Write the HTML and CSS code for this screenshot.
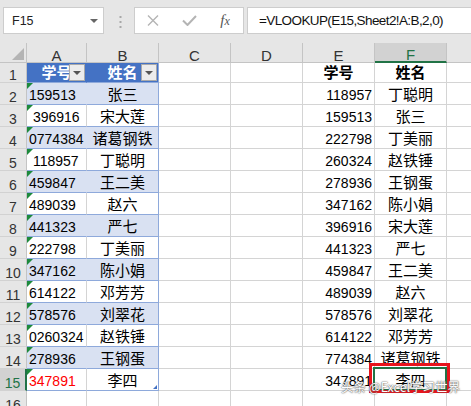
FILE: index.html
```html
<!DOCTYPE html>
<html lang="zh-CN">
<head>
<meta charset="utf-8">
<title>VLOOKUP</title>
<link rel="stylesheet" href="styles.css">
</head>
<body>
<div class="app">
  <div class="topbar">
    <div class="namebox"><span class="nbtext">F15</span><span class="nbarrow"></span></div>
    <svg class="dots" width="3" height="12" viewBox="0 0 3 12"><rect x="0.5" y="0" width="2" height="2" fill="#a8a8a8"/><rect x="0.5" y="5" width="2" height="2" fill="#a8a8a8"/><rect x="0.5" y="10" width="2" height="2" fill="#a8a8a8"/></svg>
    <div class="fxbox">
      <span class="slot"><svg width="12" height="11" viewBox="0 0 12 11"><path d="M1 0.5 L11 10.5 M11 0.5 L1 10.5" stroke="#b4b4b4" stroke-width="1.4" fill="none"/></svg></span>
      <span class="slot"><svg width="15" height="11" viewBox="0 0 15 11"><path d="M1 5.5 L5.5 10 L14 1" stroke="#b4b4b4" stroke-width="2" fill="none"/></svg></span>
      <span class="slot fx">f<span class="fxx">x</span></span>
    </div>
    <div class="formula">=VLOOKUP(E15,Sheet2!A:B,2,0)</div>
  </div>

  <div class="sheet">
    <div class="ch corner"><svg width="27" height="20" viewBox="0 0 27 20"><polygon points="12,17 24,17 24,5" fill="#b4b4b4"/></svg></div>
    <div class="ch">A</div><div class="ch">B</div><div class="ch">C</div><div class="ch">D</div><div class="ch">E</div><div class="ch sel">F</div><div class="ch">G</div>

    <div class="rh">1</div><div class="cell th ta ctr zh">学号<span class="fbtn"></span></div><div class="cell th tb ctr zh">姓名<span class="fbtn"></span></div><div class="cell"></div><div class="cell"></div><div class="cell ctr zh b">学号</div><div class="cell ctr zh b">姓名</div><div class="cell"></div>

    <div class="rh">2</div><div class="cell ta bd tri">159513</div><div class="cell tb bd ctr zh">张三</div><div class="cell"></div><div class="cell"></div><div class="cell rt">118957</div><div class="cell ctr zh">丁聪明</div><div class="cell"></div>

    <div class="rh">3</div><div class="cell ta tri"> 396916</div><div class="cell tb ctr zh">宋大莲</div><div class="cell"></div><div class="cell"></div><div class="cell rt">159513</div><div class="cell ctr zh">张三</div><div class="cell"></div>

    <div class="rh">4</div><div class="cell ta bd tri">0774384</div><div class="cell tb bd ctr zh">诸葛钢铁</div><div class="cell"></div><div class="cell"></div><div class="cell rt">222798</div><div class="cell ctr zh">丁美丽</div><div class="cell"></div>

    <div class="rh">5</div><div class="cell ta tri"> 118957</div><div class="cell tb ctr zh">丁聪明</div><div class="cell"></div><div class="cell"></div><div class="cell rt">260324</div><div class="cell ctr zh">赵铁锤</div><div class="cell"></div>

    <div class="rh">6</div><div class="cell ta bd tri">459847</div><div class="cell tb bd ctr zh">王二美</div><div class="cell"></div><div class="cell"></div><div class="cell rt">278936</div><div class="cell ctr zh">王钢蛋</div><div class="cell"></div>

    <div class="rh">7</div><div class="cell ta tri">489039</div><div class="cell tb ctr zh">赵六</div><div class="cell"></div><div class="cell"></div><div class="cell rt">347162</div><div class="cell ctr zh">陈小娟</div><div class="cell"></div>

    <div class="rh">8</div><div class="cell ta bd tri">441323</div><div class="cell tb bd ctr zh">严七</div><div class="cell"></div><div class="cell"></div><div class="cell rt">396916</div><div class="cell ctr zh">宋大莲</div><div class="cell"></div>

    <div class="rh">9</div><div class="cell ta tri">222798</div><div class="cell tb ctr zh">丁美丽</div><div class="cell"></div><div class="cell"></div><div class="cell rt">441323</div><div class="cell ctr zh">严七</div><div class="cell"></div>

    <div class="rh">10</div><div class="cell ta bd tri">347162</div><div class="cell tb bd ctr zh">陈小娟</div><div class="cell"></div><div class="cell"></div><div class="cell rt">459847</div><div class="cell ctr zh">王二美</div><div class="cell"></div>

    <div class="rh">11</div><div class="cell ta tri">614122</div><div class="cell tb ctr zh">邓芳芳</div><div class="cell"></div><div class="cell"></div><div class="cell rt">489039</div><div class="cell ctr zh">赵六</div><div class="cell"></div>

    <div class="rh">12</div><div class="cell ta bd tri">578576</div><div class="cell tb bd ctr zh">刘翠花</div><div class="cell"></div><div class="cell"></div><div class="cell rt">578576</div><div class="cell ctr zh">刘翠花</div><div class="cell"></div>

    <div class="rh">13</div><div class="cell ta tri">0260324</div><div class="cell tb ctr zh">赵铁锤</div><div class="cell"></div><div class="cell"></div><div class="cell rt">614122</div><div class="cell ctr zh">邓芳芳</div><div class="cell"></div>

    <div class="rh">14</div><div class="cell ta bd tri">278936</div><div class="cell tb bd ctr zh">王钢蛋</div><div class="cell"></div><div class="cell"></div><div class="cell rt">774384</div><div class="cell ctr zh">诸葛钢铁</div><div class="cell"></div>

    <div class="rh rsel">15</div><div class="cell ta tri red">347891</div><div class="cell tb ctr zh handle">李四</div><div class="cell"></div><div class="cell"></div><div class="cell rt">347891</div><div class="cell ctr zh active">李四<span class="selbox"></span><span class="redbox"></span></div><div class="cell"></div>

    <div class="rh">16</div><div class="cell"></div><div class="cell"></div><div class="cell"></div><div class="cell"></div><div class="cell"></div><div class="cell"></div><div class="cell"></div>
  </div>

  <div class="watermark">头条 @Excel学习世界</div>
</div>
</body>
</html>
```

FILE: styles.css
```css
html, body {
  margin: 0;
  padding: 0;
  background: #ffffff;
}

.app {
  position: relative;
  width: 471px;
  height: 406px;
  overflow: hidden;
  font-family: "Liberation Sans", "Noto Sans CJK SC", sans-serif;
}

/* ---------- formula bar ---------- */
.topbar {
  height: 43px;
  box-sizing: border-box;
  background: #e6e6e6;
  display: flex;
  align-items: flex-start;
  padding-top: 7px;
}

.namebox {
  margin-left: 3px;
  width: 101px;
  height: 27px;
  box-sizing: border-box;
  background: #ffffff;
  border: 1px solid #cdcdcd;
  display: flex;
  align-items: center;
  padding-left: 8px;
  padding-right: 5px;
}

.nbtext {
  font-size: 12.5px;
  color: #222222;
}

.nbarrow {
  margin-left: auto;
  width: 0;
  height: 0;
  border-left: 4px solid transparent;
  border-right: 4px solid transparent;
  border-top: 4px solid #666666;
}

.dots {
  margin-left: 15px;
  margin-top: 9px;
}

.fxbox {
  margin-left: 12px;
  width: 110px;
  height: 27px;
  box-sizing: border-box;
  background: #ffffff;
  border: 1px solid #cdcdcd;
  display: flex;
  align-items: center;
}

.slot {
  width: 36px;
  display: flex;
  justify-content: center;
  align-items: center;
}

.fx {
  font-family: "Liberation Serif", serif;
  font-style: italic;
  font-size: 15px;
  color: #555555;
  line-height: 15px;
}

.fxx {
  font-size: 12px;
  position: relative;
  top: 1px;
}

.formula {
  margin-left: 3px;
  flex: 1;
  height: 27px;
  box-sizing: border-box;
  background: #ffffff;
  border: 1px solid #cdcdcd;
  border-right: none;
  padding-left: 11px;
  display: flex;
  align-items: center;
  font-size: 13.5px;
  letter-spacing: -0.6px;
  color: #111111;
  white-space: nowrap;
}

/* ---------- sheet grid ---------- */
.sheet {
  display: grid;
  grid-template-columns: 27px 60px 72px 72px 72px 72px 72px 72px;
  grid-template-rows: 20px 20px repeat(15, 22px);
}

.ch {
  background: #e6e6e6;
  border-right: 1px solid #c4c4c4;
  border-bottom: 1px solid #c4c4c4;
  display: flex;
  justify-content: center;
  align-items: flex-end;
  font-size: 15px;
  line-height: 13px;
  color: #333333;
}

.ch.corner {
  display: block;
}

.ch.corner svg {
  display: block;
}

.ch.sel {
  background: #d2d2d2;
  border-bottom: 2px solid #217346;
  color: #217346;
}

.rh {
  background: #e6e6e6;
  border-right: 1px solid #c4c4c4;
  border-bottom: 1px solid #d2d2d2;
  display: flex;
  justify-content: center;
  align-items: flex-end;
  font-size: 14px;
  line-height: 14px;
  color: #333333;
}

.rh.rsel {
  background: #d2d2d2;
  border-right: 2px solid #217346;
  color: #217346;
}

.cell {
  position: relative;
  background: #ffffff;
  border-right: 1px solid #d4d4d4;
  border-bottom: 1px solid #d4d4d4;
  display: flex;
  align-items: flex-end;
  padding: 0 2px 1px 2px;
  font-size: 14px;
  line-height: 16px;
  white-space: pre;
  color: #000000;
}

.ctr { justify-content: center; }
.rt { justify-content: flex-end; }
.zh { font-size: 15px; }
.b { font-weight: bold; }
.red { color: #ff0000; }

/* table A1:B15 */
.ta, .tb { border-bottom-color: #8ea9db; }
.tb { border-right-color: #8ea9db; }
.bd { background: #d9e1f2; }
.ta.bd { border-right-color: #d9e1f2; }

.th {
  background: #4472c4;
  color: #ffffff;
  font-weight: bold;
}
.th.ta { border-right-color: #4472c4; }

.fbtn {
  position: absolute;
  right: 1px;
  top: 1px;
  width: 16px;
  height: 17px;
  box-sizing: border-box;
  background: #ececec;
  border: 1px solid #a9a9a9;
}

.fbtn::after {
  content: "";
  position: absolute;
  left: 3px;
  top: 6px;
  border-left: 4px solid transparent;
  border-right: 4px solid transparent;
  border-top: 4px solid #555555;
}

.tri::before {
  content: "";
  position: absolute;
  left: 0;
  top: 0;
  border-top: 6px solid #1d8a3c;
  border-right: 6px solid transparent;
}

.handle::after {
  content: "";
  position: absolute;
  right: 1px;
  bottom: 1px;
  border-bottom: 4px solid #4472c4;
  border-left: 4px solid transparent;
}

/* active cell F15 */
.selbox {
  position: absolute;
  left: -2px;
  top: -2px;
  width: 74px;
  height: 24px;
  box-sizing: border-box;
  border: 2px solid #217346;
  z-index: 5;
}

.redbox {
  position: absolute;
  left: -6px;
  top: -6px;
  width: 81px;
  height: 30px;
  box-sizing: border-box;
  border: 3px solid #e8141c;
  z-index: 6;
}

.watermark {
  position: absolute;
  left: 341px;
  top: 379px;
  z-index: 10;
  font-family: "Noto Sans CJK SC", sans-serif;
  font-size: 12.5px;
  line-height: 16px;
  color: #ffffff;
  text-shadow: 0 0 1px #444444, 0 0 2px #666666;
  white-space: nowrap;
}
```
